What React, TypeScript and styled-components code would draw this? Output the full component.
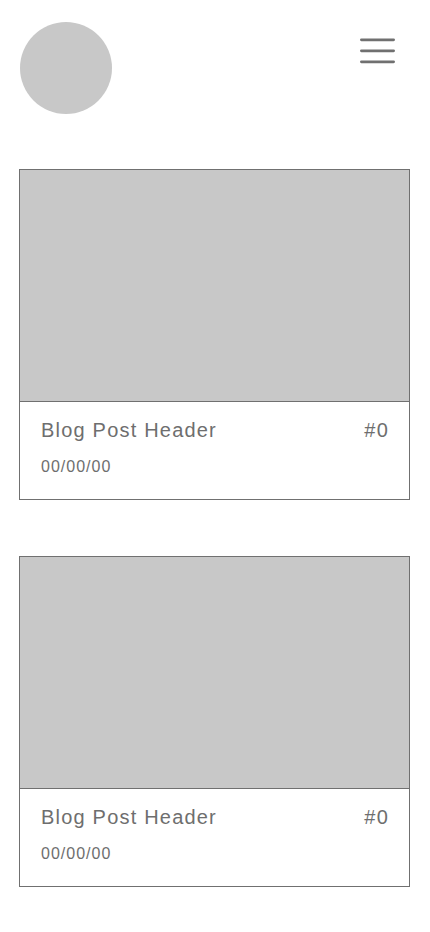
import React from "react";
import styled, { createGlobalStyle } from "styled-components";

const GlobalStyle = createGlobalStyle`
  html, body {
    margin: 0;
    padding: 0;
    background: #ffffff;
    font-family: "Liberation Sans", Arial, Helvetica, sans-serif;
  }
  * { box-sizing: border-box; }
`;

const Page = styled.div`
  width: 430px;
  min-height: 932px;
  background: #ffffff;
  display: flex;
  flex-direction: column;
`;

const Header = styled.header`
  display: flex;
  justify-content: space-between;
  align-items: flex-start;
  padding: 22px 35px 0 20px;
  height: 169px;
`;

const Avatar = styled.div`
  width: 92px;
  height: 92px;
  border-radius: 50%;
  background: #c8c8c8;
`;

const MenuButton = styled.button`
  margin-top: 16px;
  width: 35px;
  height: 28px;
  padding: 0;
  border: none;
  background: transparent;
  cursor: pointer;
  display: block;
`;

const CardList = styled.main`
  display: flex;
  flex-direction: column;
  gap: 56px;
  padding: 0 20px 0 19px;
`;

const Card = styled.article`
  width: 391px;
  border: 1px solid #707070;
  display: flex;
  flex-direction: column;
`;

const CardImage = styled.div`
  height: 232px;
  background: #c8c8c8;
  border-bottom: 1px solid #707070;
`;

const CardBody = styled.div`
  height: 97px;
  padding: 16px 20px 0 21px;
  color: #6e6e6e;
`;

const TitleRow = styled.div`
  display: flex;
  justify-content: space-between;
  align-items: baseline;
  font-size: 20px;
  line-height: 24px;
  letter-spacing: 1.2px;
`;

const Title = styled.h2`
  margin: 0;
  font-size: inherit;
  font-weight: 400;
`;

const Number = styled.span`
  font-weight: 400;
`;

const DateText = styled.div`
  margin-top: 15px;
  font-size: 16px;
  line-height: 20px;
  letter-spacing: 1px;
`;

const MenuIcon = () => (
  <svg width="35" height="28" viewBox="0 0 35 28" fill="none">
    <g stroke="#707070" strokeWidth="2.8" strokeLinecap="round">
      <line x1="1.4" y1="1.8" x2="33.6" y2="1.8" />
      <line x1="1.4" y1="12.8" x2="33.6" y2="12.8" />
      <line x1="1.4" y1="23.8" x2="33.6" y2="23.8" />
    </g>
  </svg>
);

const posts = [
  { title: "Blog Post Header", num: "#0", date: "00/00/00" },
  { title: "Blog Post Header", num: "#0", date: "00/00/00" },
];

export default function App() {
  return (
    <>
      <GlobalStyle />
      <Page>
        <Header>
          <Avatar />
          <MenuButton aria-label="Menu">
            <MenuIcon />
          </MenuButton>
        </Header>
        <CardList>
          {posts.map((p, i) => (
            <Card key={i}>
              <CardImage />
              <CardBody>
                <TitleRow>
                  <Title>{p.title}</Title>
                  <Number>{p.num}</Number>
                </TitleRow>
                <DateText>{p.date}</DateText>
              </CardBody>
            </Card>
          ))}
        </CardList>
      </Page>
    </>
  );
}
